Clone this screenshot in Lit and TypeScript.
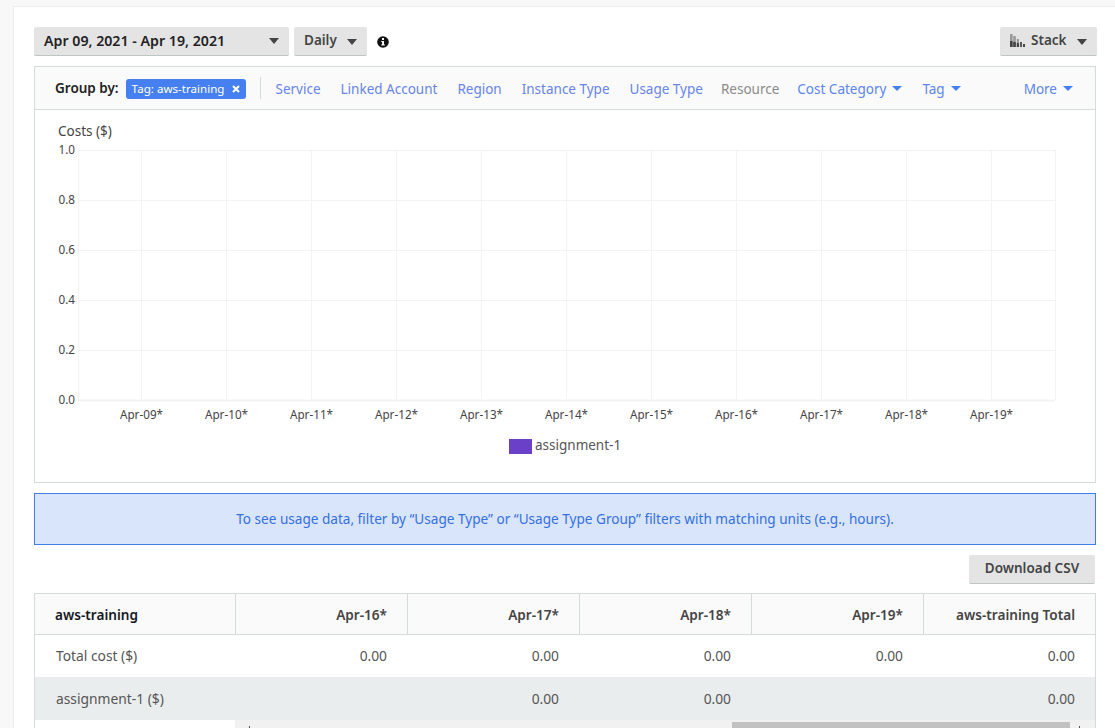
import { LitElement, html, css, svg } from 'lit';
import { customElement } from 'lit/decorators.js';

const caret = () => html`<span class="caret"></span>`;

@customElement('cost-chart')
class CostChart extends LitElement {
  static styles = css`
    :host { display: block; height: 373px; }
    svg { display: block; }
    text { font-family: "Noto Sans", sans-serif; font-size: 11.7px; fill: #444; }
    .title { font-size: 13.5px; fill: #444; }
    .legend { font-size: 13.5px; fill: #555; }
  `;

  render() {
    const days = ['09', '10', '11', '12', '13', '14', '15', '16', '17', '18', '19'];
    const ys = [1, 0.8, 0.6, 0.4, 0.2, 0];
    return html`<svg width="1060" height="373" viewBox="1 110 1060 373">
      <text class="title" x="24" y="136">Costs ($)</text>
      ${ys.map((v, i) => {
        const y = 150 + i * 50;
        return svg`<line x1="44" x2="1021" y1=${y + 0.5} y2=${y + 0.5} stroke="#f3f3f3" stroke-width=${i === 5 ? 2 : 1}></line>
          <text x="41" y=${y + 4} text-anchor="end">${v.toFixed(1)}</text>`;
      })}
      ${days.map((d, i) => {
        const x = 107.5 + i * 85;
        return svg`<line x1=${x} x2=${x} y1="150" y2="400" stroke="#f3f3f3"></line>
          <text x=${x} y="419" text-anchor="middle">Apr-${d}*</text>`;
      })}
      <line x1="44.5" x2="44.5" y1="150" y2="400" stroke="#f3f3f3"></line>
      <line x1="1021.5" x2="1021.5" y1="150" y2="400" stroke="#f3f3f3"></line>
      <rect x="475" y="439" width="23" height="15" fill="#6b40c9"></rect>
      <text class="legend" x="501" y="450">assignment-1</text>
    </svg>`;
  }
}

@customElement('app-root')
class AppRoot extends LitElement {
  static styles = css`
    :host {
      display: block;
      height: 728px;
      overflow: hidden;
      background: #f8f8f8;
      font-family: "Noto Sans", sans-serif;
      font-size: 13.5px;
      color: #444;
      padding: 6px 0 0 13px;
      box-sizing: border-box;
    }
    .panel {
      background: #fff;
      border: solid #eaeded;
      border-width: 1px 0 0 1px;
      height: 722px;
      padding: 20px 19px 0 20px;
      box-sizing: border-box;
    }
    .toolbar { display: flex; align-items: center; gap: 5px; height: 29px; }
    .btn {
      display: flex;
      align-items: center;
      box-sizing: border-box;
      height: 29px;
      background: #e4e4e4;
      border-radius: 2px;
      border-bottom: 1px solid #bfc4c4;
      font-weight: 600;
      color: #444;
      white-space: nowrap;
    }
    .raised .caret { margin-top: 3px; }
    .date { width: 255px; padding: 0 10px 1px; color: #222; font-size: 14.2px; justify-content: space-between; }
    .daily { width: 73px; padding: 0 10px 2px; justify-content: space-between; }
    .stack { width: 97px; margin-left: auto; padding: 0 10px 2px; gap: 6px; margin-right: -1px; }
    .stack .caret { margin-left: auto; }
    .caret {
      display: inline-block;
      width: 0;
      height: 0;
      border: solid transparent;
      border-width: 6px 5px 0;
      border-top-color: #444;
    }
    .info { margin-left: 5px; display: block; }
    .card {
      margin-top: 10px;
      border: 1px solid #d5dbdb;
      height: 417px;
      box-sizing: border-box;
    }
    .group {
      display: flex;
      align-items: center;
      height: 43px;
      box-sizing: border-box;
      background: #fafafa;
      border-bottom: 1px solid #d5dbdb;
      padding: 0 22px 0 20px;
      white-space: nowrap;
    }
    .group b { font-weight: 600; color: #222; }
    .chip {
      display: flex;
      align-items: center;
      gap: 8px;
      height: 20px;
      margin: 1px 0 0 7px;
      padding: 0 6px 0 6px;
      background: #4680f0;
      border-radius: 3px;
      color: #fff;
      font-size: 11.6px;
    }
    .sep { width: 1px; height: 22px; background: #d5dbdb; margin: 0 14px; }
    .links { display: flex; flex: 1; gap: 20px; color: #6684ea; padding-top: 1px; }
    .links .off { color: #8a8a8a; margin-left: -2px; }
    .links span { display: flex; align-items: center; gap: 6px; }
    .links .cat { margin-left: -2px; color: #5c85ee; }
    .links .tag { color: #5c85ee; }
    .links .more { margin-left: auto; color: #5c85ee; }
    .links .caret { border-width: 5px 5px 0; border-top-color: #4680f0; }
    .alert {
      margin-top: 10px;
      height: 52px;
      box-sizing: border-box;
      padding-bottom: 1px;
      display: flex;
      align-items: center;
      justify-content: center;
      background: #d8e5fb;
      border: 1px solid #3f7de8;
      color: #3570e0;
      font-size: 13.58px;
    }
    .actions { display: flex; justify-content: flex-end; margin-top: 10px; }
    .csv { width: 126px; justify-content: center; margin-right: 1px; padding-bottom: 2px; }
    .table {
      margin-top: 9px;
      border: solid #d5dbdb;
      border-width: 1px 1px 0;
      display: grid;
      grid-template-columns: 201px repeat(4, 172px) 1fr;
      grid-template-rows: 41px 42px 43px 20px;
    }
    .cell {
      display: flex;
      align-items: center;
      justify-content: flex-end;
      padding: 0 21px 2px 21px;
      white-space: nowrap;
      font-size: 13.8px;
      color: #555;
    }
    .cell.alt { padding-bottom: 0; }
    .cell.last { padding-right: 20px; }
    .head {
      background: #fafafa;
      font-weight: 600;
      font-size: 13.6px;
      color: #444;
      padding: 0 20px 0 21px;
      border-bottom: 1px solid #d5dbdb;
      border-right: 1px solid #d5dbdb;
    }
    .head.last { border-right: 0; }
    .name { justify-content: flex-start; }
    .head.name { color: #16191f; padding-left: 20px; }
    .alt { background: #eaeded; }
    .track {
      position: relative;
      grid-column: 2 / 7;
      margin-left: -1px;
      background: #f1f1f1;
      padding: 2px 0 0 497px;
    }
    .thumb { width: 338px; height: 18px; background: #c1c1c1; }
    .arrow { position: absolute; top: 6px; width: 1px; height: 2px; background: #505050; }
    .arrow.left { left: 14px; }
    .arrow.right { right: 15px; }
  `;

  render() {
    const dates = ['Apr-16*', 'Apr-17*', 'Apr-18*', 'Apr-19*', 'aws-training Total'];
    const alt = ['', '0.00', '0.00', '', '0.00'];
    return html`<div class="panel">
      <div class="toolbar">
        <div class="btn date">Apr 09, 2021 - Apr 19, 2021 ${caret()}</div>
        <div class="btn daily raised">Daily ${caret()}</div>
        <svg class="info" width="12" height="12" viewBox="0 0 12 12">
          <circle cx="6" cy="6" r="5.8" fill="#111"></circle>
          <rect x="5" y="2" width="2" height="2" fill="#fff"></rect>
          <path d="M4.2 5h2.8v3.4h.9v1H4.2v-1h.9V6h-.9z" fill="#fff"></path>
        </svg>
        <div class="btn stack raised">
          <svg width="15" height="13" viewBox="0 0 15 13">
            <rect x="0" y="0" width="2.6" height="13" fill="#9a9a9a"></rect>
            <rect x="0" y="7" width="2.6" height="6" fill="#444"></rect>
            <rect x="3.2" y="2" width="2.6" height="11" fill="#9a9a9a"></rect>
            <rect x="3.2" y="8" width="2.6" height="5" fill="#444"></rect>
            <rect x="6.8" y="5" width="2.2" height="8" fill="#9a9a9a"></rect>
            <rect x="6.8" y="9" width="2.2" height="4" fill="#444"></rect>
            <rect x="10" y="8" width="2" height="5" fill="#555"></rect>
            <rect x="13" y="10" width="2" height="3" fill="#444"></rect>
          </svg>
          Stack ${caret()}
        </div>
      </div>
      <div class="card">
        <div class="group">
          <b>Group by:</b>
          <div class="chip">Tag: aws-training
            <svg width="8" height="8" viewBox="0 0 8 8"><path d="M1 1l6 6M7 1L1 7" stroke="#fff" stroke-width="2"></path></svg>
          </div>
          <div class="sep"></div>
          <div class="links">
            <span>Service</span>
            <span>Linked Account</span>
            <span>Region</span>
            <span>Instance Type</span>
            <span>Usage Type</span>
            <span class="off">Resource</span>
            <span class="cat">Cost Category ${caret()}</span>
            <span class="tag">Tag ${caret()}</span>
            <span class="more">More ${caret()}</span>
          </div>
        </div>
        <cost-chart></cost-chart>
      </div>
      <div class="alert">To see usage data, filter by “Usage Type” or “Usage Type Group” filters with matching units (e.g., hours).</div>
      <div class="actions"><div class="btn csv">Download CSV</div></div>
      <div class="table">
        <div class="cell head name">aws-training</div>
        ${dates.map((d, i) => html`<div class="cell head ${i === 4 ? 'last' : ''}">${d}</div>`)}
        <div class="cell name">Total cost ($)</div>
        ${dates.map((_, i) => html`<div class="cell ${i === 4 ? 'last' : ''}">0.00</div>`)}
        <div class="cell name alt">assignment-1 ($)</div>
        ${alt.map((v, i) => html`<div class="cell alt ${i === 4 ? 'last' : ''}">${v}</div>`)}
        <div></div>
        <div class="track">
          <div class="arrow left"></div>
          <div class="thumb"></div>
          <div class="arrow right"></div>
        </div>
      </div>
    </div>`;
  }
}
